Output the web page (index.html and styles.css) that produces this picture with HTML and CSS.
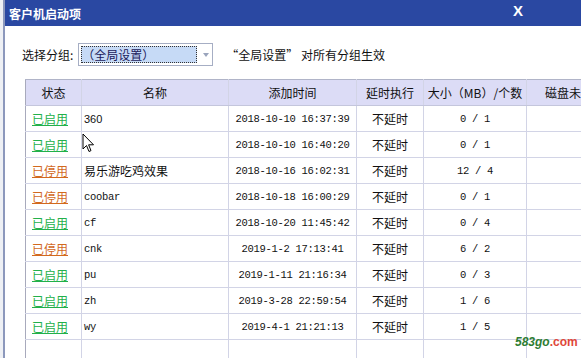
FILE: index.html
```html
<!DOCTYPE html>
<html lang="zh-CN">
<head>
  <meta charset="UTF-8" />
  <title>客户机启动项</title>
  <link rel="stylesheet" href="styles.css">
</head>
<body>

  <div class="side"></div>

  <div class="dialog">
    <div class="titlebar">
      <span class="title">客户机启动项</span>
      <span class="close">X</span>
    </div>

    <div class="toolbar">
      <label>选择分组:</label>
      <div class="select">
        <span class="select-value">（全局设置）</span>
        <span class="select-arrow"></span>
      </div>
      <span class="hint">“全局设置” 对所有分组生效</span>
    </div>

    <table class="grid">
      <colgroup>
        <col class="c-status"><col class="c-name"><col class="c-time">
        <col class="c-delay"><col class="c-size"><col class="c-disk">
      </colgroup>
      <thead>
        <tr>
          <th>状态</th><th>名称</th><th>添加时间</th><th>延时执行</th><th>大小（MB）/个数</th><th class="disk">磁盘未分配</th>
        </tr>
      </thead>
      <tbody>
        <tr><td><a class="on">已启用</a></td><td class="name sans">360</td><td class="mono">2018-10-10 16:37:39</td><td>不延时</td><td class="mono">0 / 1</td><td></td></tr>
        <tr><td><a class="on">已启用</a></td><td class="name"></td><td class="mono">2018-10-10 16:40:20</td><td>不延时</td><td class="mono">0 / 1</td><td></td></tr>
        <tr><td><a class="off">已停用</a></td><td class="name">易乐游吃鸡效果</td><td class="mono">2018-10-16 16:02:31</td><td>不延时</td><td class="mono">12 / 4</td><td></td></tr>
        <tr><td><a class="off">已停用</a></td><td class="name mono">coobar</td><td class="mono">2018-10-18 16:00:29</td><td>不延时</td><td class="mono">0 / 1</td><td></td></tr>
        <tr><td><a class="on">已启用</a></td><td class="name mono">cf</td><td class="mono">2018-10-20 11:45:42</td><td>不延时</td><td class="mono">0 / 4</td><td></td></tr>
        <tr><td><a class="off">已停用</a></td><td class="name mono">cnk</td><td class="mono">2019-1-2 17:13:41</td><td>不延时</td><td class="mono">6 / 2</td><td></td></tr>
        <tr><td><a class="on">已启用</a></td><td class="name mono">pu</td><td class="mono">2019-1-11 21:16:34</td><td>不延时</td><td class="mono">0 / 3</td><td></td></tr>
        <tr><td><a class="on">已启用</a></td><td class="name mono">zh</td><td class="mono">2019-3-28 22:59:54</td><td>不延时</td><td class="mono">1 / 6</td><td></td></tr>
        <tr><td><a class="on">已启用</a></td><td class="name mono">wy</td><td class="mono">2019-4-1 21:21:13</td><td>不延时</td><td class="mono">1 / 5</td><td></td></tr>
        <tr class="filler"><td></td><td></td><td></td><td></td><td></td><td></td></tr>
      </tbody>
    </table>
  </div>

  <svg class="cursor" width="13" height="21" viewBox="0 0 13 21">
    <path d="M1 1 L1 16 L4.5 12.5 L7 18.5 L9 17.6 L6.6 11.8 L11.5 11.8 Z" fill="#fff" stroke="#000" stroke-width="1"/>
  </svg>

  <div class="watermark"><b>583go</b><span>.com</span></div>

</body>
</html>
```

FILE: styles.css
```css
body {
  margin: 0;
  width: 581px;
  height: 358px;
  overflow: hidden;
  display: flex;
  background: #fff;
  font-family: "Noto Sans CJK SC", "Liberation Sans", sans-serif;
  font-size: 12px;
  color: #111;
  position: relative;
}

.side {
  width: 3px;
  flex: none;
  background: #eef0f4;
  border-right: 2px solid #8c98bc;
}

.dialog {
  flex: 1;
  min-width: 0;
  overflow: hidden;
}

.titlebar {
  height: 26px;
  background: #2a48a2;
  display: flex;
  align-items: center;
  justify-content: space-between;
  padding: 0 0 0 4px;
  color: #fff;
}

.title {
  font-size: 12px;
  font-weight: bold;
}

.close {
  font-family: "Liberation Sans", sans-serif;
  font-weight: bold;
  font-size: 15px;
  margin-right: 58px;
  margin-top: -6px;
}

.toolbar {
  display: flex;
  align-items: center;
  height: 23px;
  padding: 17px 0 0 17px;
}

.select {
  width: 131px;
  height: 21px;
  border: 1px solid #a6aec4;
  margin-left: 5px;
  display: flex;
  align-items: center;
  padding-left: 2px;
}

.select-value {
  width: 114px;
  height: 15px;
  line-height: 15px;
  background: #c6daf6;
  border: 1px dotted #333;
  color: #1a1a5a;
  font-size: 12px;
}

.select-arrow {
  margin-left: 6px;
  border-left: 3px solid transparent;
  border-right: 3px solid transparent;
  border-top: 4px solid #9aa4bc;
}

.hint {
  margin-left: 13px;
}

.grid {
  margin: 13px 0 0 20px;
  border-collapse: collapse;
  table-layout: fixed;
  width: 601px;
}

.c-status { width: 56px; }
.c-name { width: 147px; }
.c-time { width: 128px; }
.c-delay { width: 67px; }
.c-size { width: 103px; }
.c-disk { width: 100px; }

.grid th,
.grid td {
  height: 25px;
  padding: 0;
  border: 1px solid #d2d4e6;
  text-align: center;
  white-space: nowrap;
  overflow: hidden;
}

.grid thead th {
  background: #dcdcf6;
  font-weight: normal;
  border-top-color: #b0b4c8;
  border-bottom-color: #c4c6dc;
}

.grid th:first-child,
.grid td:first-child {
  border-left-color: #a8aabc;
  text-align: left;
  padding-left: 6px;
}

.grid th:first-child {
  text-align: center;
  padding-left: 0;
}

.grid th.disk {
  text-align: left;
  padding-left: 18px;
}

.grid td.name {
  text-align: left;
  padding-left: 2px;
}

.mono {
  font-family: "Liberation Mono", monospace;
  font-size: 10.5px;
  letter-spacing: -0.3px;
}

.sans {
  font-family: "Liberation Sans", sans-serif;
  font-size: 11px;
}

.grid tr.filler td {
  height: 30px;
  border-bottom: none;
}

a {
  text-decoration: underline;
  cursor: pointer;
}

a.on { color: #22b04a; }
a.off { color: #d2691e; }

.cursor {
  position: absolute;
  left: 82px;
  top: 133px;
}

.watermark {
  position: absolute;
  left: 515px;
  top: 335px;
  font-family: "Liberation Sans", sans-serif;
  font-size: 12px;
  font-style: italic;
  font-weight: bold;
}

.watermark b { color: #2e7d32; }
.watermark span { color: #e0473a; font-style: normal; }
```
